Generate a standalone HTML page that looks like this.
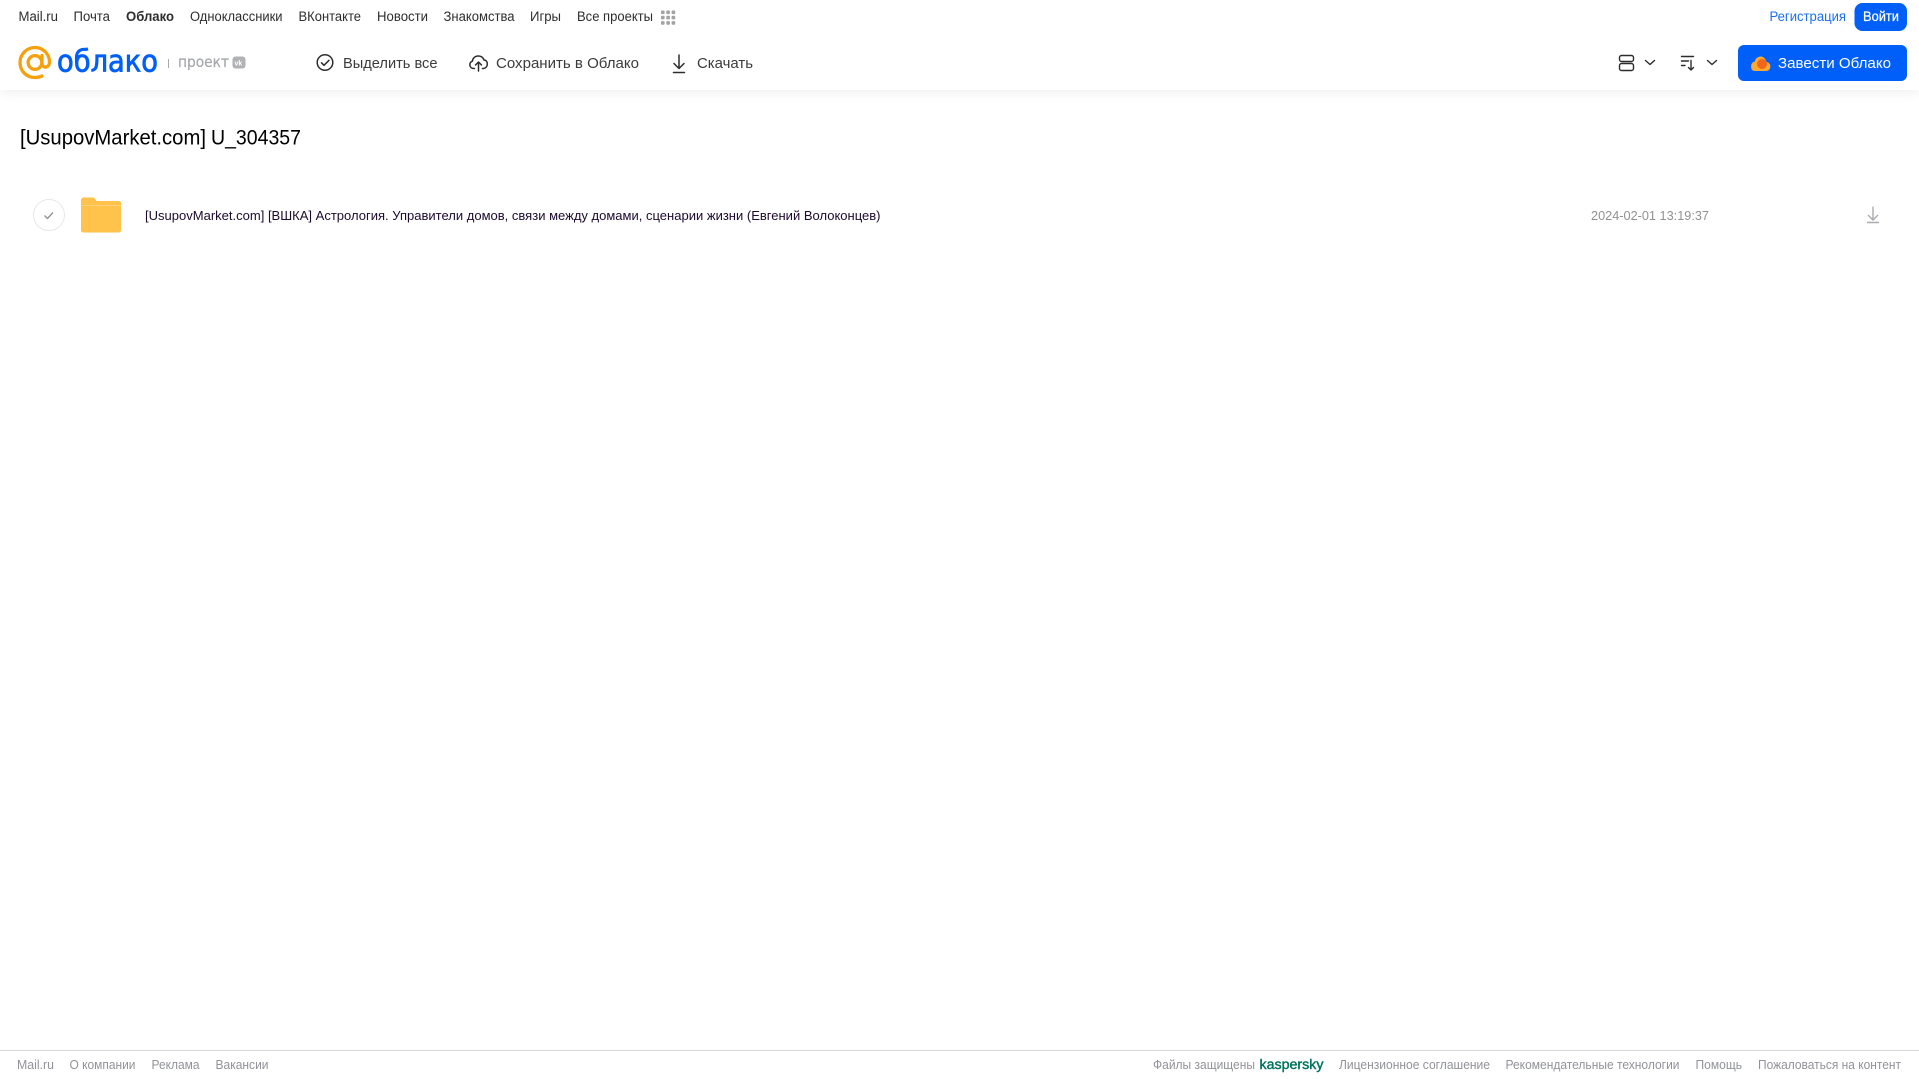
<!DOCTYPE html>
<html lang="ru"><head><meta charset="utf-8"><title>Облако</title>
<style>
html,body{margin:0;padding:0;background:#fff;width:1919px;height:1079px;overflow:hidden}
#hd{position:absolute;left:0;top:0;width:1919px;height:90px;background:#fff;box-shadow:0 2px 12px rgba(0,0,0,.07)}
svg{position:absolute;left:0;top:0}
text{font-family:"Liberation Sans",sans-serif}
.n{font-size:13.5px;fill:#2c2d2e}
.t{font-size:15px;fill:#3a3b3c}
.f{font-size:12.5px;fill:#919399}
</style></head><body>
<div id="hd"></div>
<svg width="1919" height="1079" viewBox="0 0 1919 1079" xmlns="http://www.w3.org/2000/svg">
<text class="n" x="18.5" y="21" textLength="39.5" lengthAdjust="spacingAndGlyphs">Mail.ru</text>
<text class="n" x="73.5" y="21" textLength="36.5" lengthAdjust="spacingAndGlyphs">Почта</text>
<text class="n" x="126" y="21" textLength="48" lengthAdjust="spacingAndGlyphs" font-weight="700">Облако</text>
<text class="n" x="190" y="21" textLength="92.5" lengthAdjust="spacingAndGlyphs">Одноклассники</text>
<text class="n" x="298.5" y="21" textLength="62.5" lengthAdjust="spacingAndGlyphs">ВКонтакте</text>
<text class="n" x="377" y="21" textLength="51" lengthAdjust="spacingAndGlyphs">Новости</text>
<text class="n" x="443.5" y="21" textLength="71" lengthAdjust="spacingAndGlyphs">Знакомства</text>
<text class="n" x="530" y="21" textLength="31" lengthAdjust="spacingAndGlyphs">Игры</text>
<text class="n" x="577" y="21" textLength="76" lengthAdjust="spacingAndGlyphs">Все проекты</text>
<g fill="#a3a3a3">
<rect x="661" y="10.500" width="3.600" height="3.600" rx=".8"/><rect x="666.300" y="10.500" width="3.600" height="3.600" rx=".8"/><rect x="671.600" y="10.500" width="3.600" height="3.600" rx=".8"/>
<rect x="661" y="15.800" width="3.600" height="3.600" rx=".8"/><rect x="666.300" y="15.800" width="3.600" height="3.600" rx=".8"/><rect x="671.600" y="15.800" width="3.600" height="3.600" rx=".8"/>
<rect x="661" y="21.100" width="3.600" height="3.600" rx=".8"/><rect x="666.300" y="21.100" width="3.600" height="3.600" rx=".8"/><rect x="671.600" y="21.100" width="3.600" height="3.600" rx=".8"/>
</g>
<text x="1769.500" y="21" font-size="13.500" fill="#1a6ff0" textLength="76.500" lengthAdjust="spacingAndGlyphs">Регистрация</text>
<rect x="1854.500" y="3" width="52.500" height="28" rx="8" fill="#005ff9"/>
<text x="1863" y="21" font-size="13.500" fill="#fff" stroke="#fff" stroke-width=".25" textLength="36" lengthAdjust="spacingAndGlyphs">Войти</text>

<g fill="none" stroke="#f5a10e" stroke-width="3.300" stroke-linecap="round">
<circle cx="35" cy="62.500" r="6.900"/>
<path d="M42 55.500v8c0 5 7.500 5 7.500-1.500 0-8-6.500-14.500-14.500-14.500s-15 6.500-15 15 6.500 15 15 15c2.500 0 5-.5 7-1.500"/>
</g>
<text x="57" y="71.500" font-size="30" fill="#005ff9" stroke="#005ff9" stroke-width=".8" textLength="101" lengthAdjust="spacingAndGlyphs" style="font-family:'DejaVu Sans',sans-serif">облако</text>
<rect x="168" y="59" width="1" height="9" fill="#aaa"/>
<text x="178" y="67" font-size="15" fill="#a5a7ab" stroke="#a5a7ab" stroke-width=".2" textLength="51" lengthAdjust="spacingAndGlyphs" style="font-family:'DejaVu Sans',sans-serif">проект</text>
<rect x="232.500" y="56.500" width="13" height="12" rx="3" fill="#b0b2b6"/>
<text x="234.500" y="65.500" font-size="7" font-weight="700" fill="#fff">vk</text>

<g fill="none" stroke="#2c2d2e" stroke-width="1.500" stroke-linecap="round" stroke-linejoin="round">
<circle cx="325" cy="62.500" r="7.800"/><path d="M321.500 62.800l2.500 2.500 5-5"/>
<path d="M474.500 68.500h-.5c-5 0-5.500-6-1.500-7.500 .5-6 9.500-7 11.500-1 4.500 0 4.500 8-.5 8.500h-1"/>
<path d="M478.500 71v-9M475.500 65l3-3 3 3"/>
<path d="M679 55v13M674 63.500l5 5 5-5M673.500 72.500h11"/>
</g>
<text class="t" x="343" y="68" textLength="94.500" lengthAdjust="spacingAndGlyphs">Выделить все</text>
<text class="t" x="496" y="68" textLength="143" lengthAdjust="spacingAndGlyphs">Сохранить в Облако</text>
<text class="t" x="697" y="68" textLength="56" lengthAdjust="spacingAndGlyphs">Скачать</text>

<g fill="none" stroke="#2c2d2e" stroke-width="1.400" stroke-linecap="round" stroke-linejoin="round">
<rect x="1619.500" y="55.500" width="14" height="6" rx="2"/><rect x="1619.500" y="63.500" width="14" height="7" rx="2"/>
<path d="M1645.500 60.500l4.500 4 4.500-4M1707.500 60.500l4.500 4 4.500-4"/>
<path d="M1681.500 56.500h12M1681.500 61h7M1681.500 65.500h3.500M1691 60.500v9M1688.500 67.500l2.500 2.500 2.500-2.500"/>
</g>
<rect x="1738" y="45" width="169" height="36" rx="6" fill="#005ff9"/>
<path d="M1755 71h11c5.500 0 6-8 .5-9-1-4-4.500-6.500-8-5-2 .8-3.500 2.500-3.500 4.500-5 .5-5.500 9.500 0 9.500z" fill="#ffa930"/>
<circle cx="1762" cy="64" r="5" fill="#f2651c"/>
<text x="1778" y="68" font-size="15" fill="#fff" textLength="113" lengthAdjust="spacingAndGlyphs">Завести Облако</text>

<text x="20" y="144.500" font-size="21.500" fill="#000" textLength="186" lengthAdjust="spacingAndGlyphs">[UsupovMarket.com]</text>
<text x="211" y="144.500" font-size="21.500" fill="#000" textLength="90" lengthAdjust="spacingAndGlyphs">U_304357</text>

<circle cx="49" cy="215" r="15.500" fill="#fff" stroke="#e7e8ea"/>
<path d="M44.500 215.500l3 3 5.500-6" fill="none" stroke="#919399" stroke-width="1.400"/>
<path d="M81 200c0-1.500 1-2.500 2.500-2.500h9c1.500 0 2 .5 3 2l1 1.500H119c1.500 0 2 1 2 2v27c0 1.500-1 2.500-2.500 2.500h-35c-1.500 0-2.500-1-2.500-2.500z" fill="#ffc24a"/>
<rect x="81" y="205" width="40" height="1" fill="#ffd27a"/>
<text x="145" y="220" font-size="13" fill="#1d0a2e" textLength="735.500" lengthAdjust="spacingAndGlyphs">[UsupovMarket.com] [ВШКА] Астрология. Управители домов, связи между домами, сценарии жизни (Евгений Волоконцев)</text>
<text x="1591" y="220" font-size="12.500" fill="#8f9194" textLength="118" lengthAdjust="spacingAndGlyphs">2024-02-01 13:19:37</text>
<path d="M1873 206.500v13M1868 215l5 5 5-5M1867 222.500h12" fill="none" stroke="#a9abae" stroke-width="1.400"/>

<rect x="0" y="1050" width="1919" height="1" fill="#d8d8d8"/>
<text class="f" x="17" y="1069" textLength="37" lengthAdjust="spacingAndGlyphs">Mail.ru</text>
<text class="f" x="69.500" y="1069" textLength="66" lengthAdjust="spacingAndGlyphs">О компании</text>
<text class="f" x="151.500" y="1069" textLength="48" lengthAdjust="spacingAndGlyphs">Реклама</text>
<text class="f" x="215.500" y="1069" textLength="53" lengthAdjust="spacingAndGlyphs">Вакансии</text>
<text class="f" x="1153" y="1069" textLength="102" lengthAdjust="spacingAndGlyphs">Файлы защищены</text>
<text x="1259.500" y="1069" font-size="13.500" fill="#00735c" stroke="#00735c" stroke-width=".4" textLength="64" lengthAdjust="spacingAndGlyphs">kaspersky</text>
<text class="f" x="1339" y="1069" textLength="151" lengthAdjust="spacingAndGlyphs">Лицензионное соглашение</text>
<text class="f" x="1505.500" y="1069" textLength="174" lengthAdjust="spacingAndGlyphs">Рекомендательные технологии</text>
<text class="f" x="1695.500" y="1069" textLength="46.500" lengthAdjust="spacingAndGlyphs">Помощь</text>
<text class="f" x="1758" y="1069" textLength="143" lengthAdjust="spacingAndGlyphs">Пожаловаться на контент</text>
</svg>
</body></html>
